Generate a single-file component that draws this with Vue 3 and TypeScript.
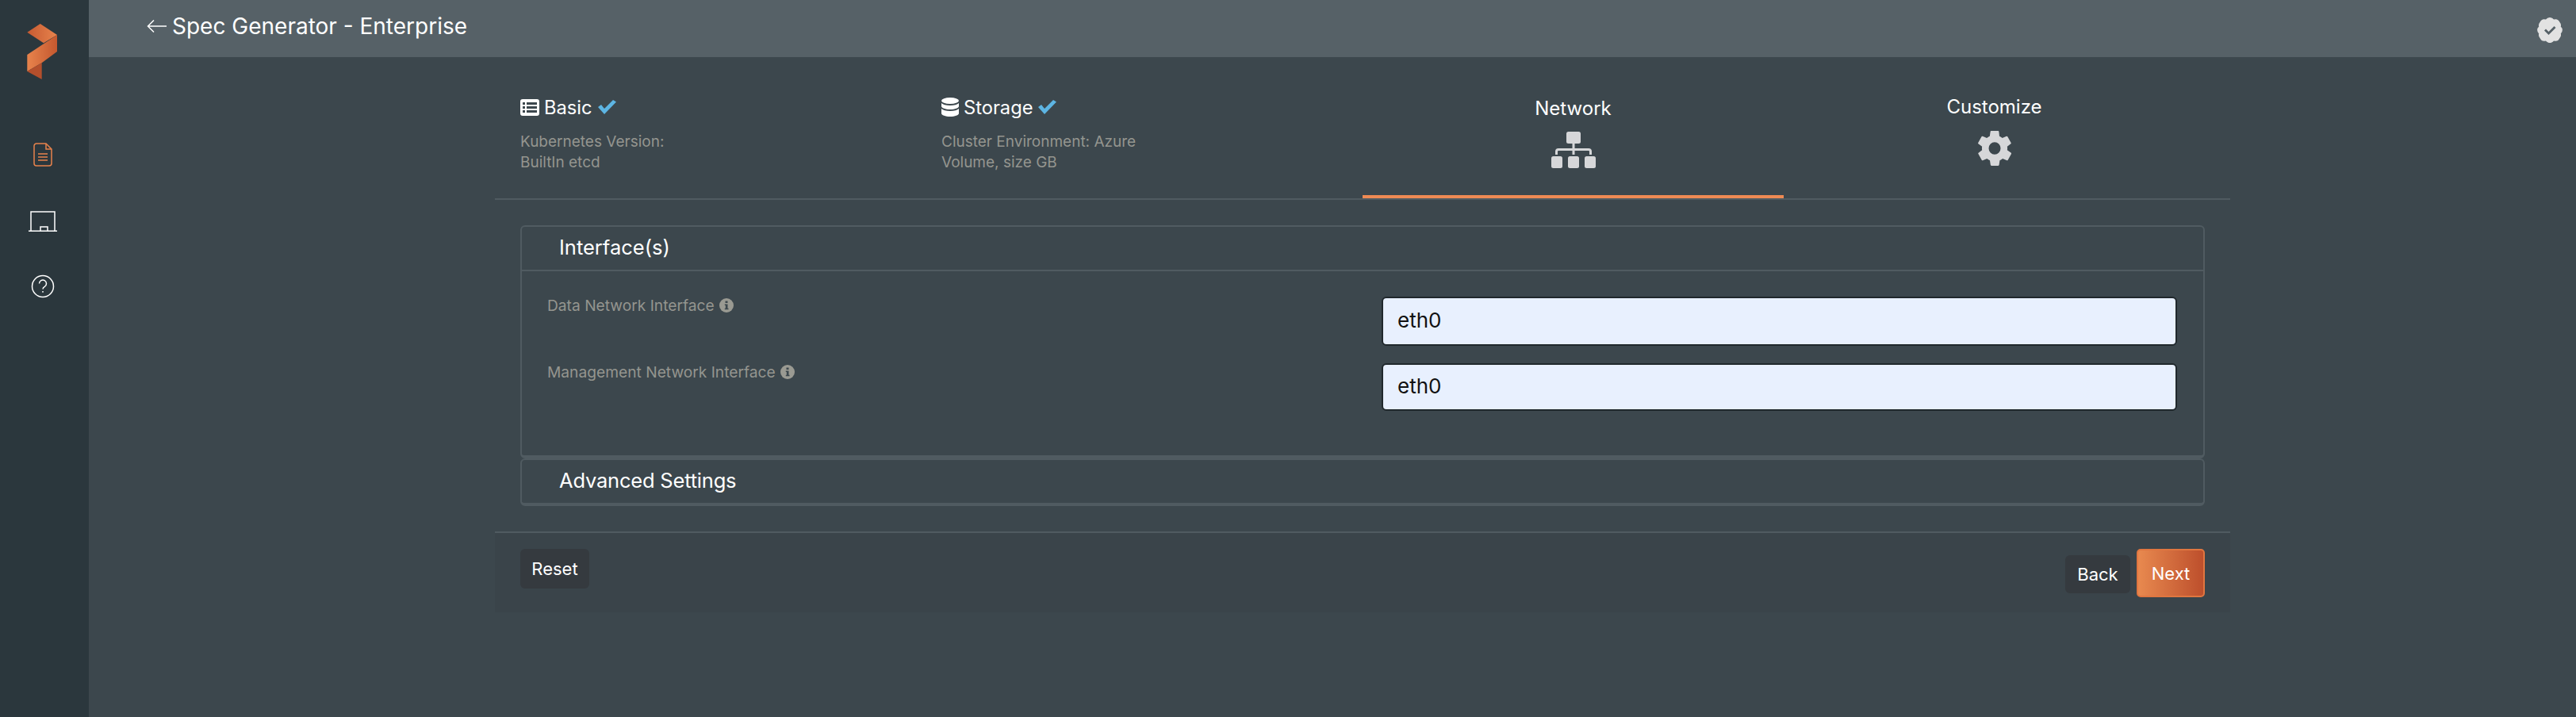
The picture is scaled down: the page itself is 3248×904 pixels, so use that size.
<script setup lang="ts">
interface Step {
  id: string
  title: string
  done: boolean
  lines: string[]
}

const steps: Step[] = [
  { id: 'basic', title: 'Basic', done: true, lines: ['Kubernetes Version:', 'BuiltIn etcd'] },
  { id: 'storage', title: 'Storage', done: true, lines: ['Cluster Environment: Azure', 'Volume, size GB'] },
  { id: 'network', title: 'Network', done: false, lines: [] },
  { id: 'customize', title: 'Customize', done: false, lines: [] },
]

const fields = ['Data Network Interface', 'Management Network Interface']
</script>

<template>
  <div class="page">
    <aside class="side">
      <svg class="logo" viewBox="0 0 40 70" width="40" height="70">
        <defs>
          <linearGradient id="lgA" x1="0" y1="0" x2="1" y2="0">
            <stop offset="0" stop-color="#c65a32" />
            <stop offset="1" stop-color="#e8834c" />
          </linearGradient>
          <linearGradient id="lgB" x1="0" y1="0" x2="1" y2="0">
            <stop offset="0" stop-color="#e8834c" />
            <stop offset="1" stop-color="#c4582f" />
          </linearGradient>
        </defs>
        <path d="M0.300 10.700 L16.700 0 L38 14 L21 24.300 Z" fill="url(#lgA)" />
        <path d="M38 14 L38 35 L18.700 49.300 L0.300 60 L0.300 39 Z" fill="url(#lgB)" />
        <path d="M0.300 60 L18.700 49.300 L18.700 70 Z" fill="#b44f2c" />
      </svg>
      <nav class="side-nav">
        <svg width="24" height="30" viewBox="0 0 24 30" fill="none" stroke="#e8834c" stroke-width="1.500">
          <path d="M4 1h12l7 7v18a3 3 0 0 1-3 3H4a3 3 0 0 1-3-3V4a3 3 0 0 1 3-3z" />
          <path d="M16 1v7h7M6 14h12M6 18h12M6 22h12" />
        </svg>
        <svg width="36" height="28" viewBox="0 0 36 28" fill="none" stroke="#fff" stroke-width="1.500">
          <path d="M3 27V3h30v24M0 27.200h36M15 27v-5h9v5" />
        </svg>
        <svg width="30" height="30" viewBox="0 0 30 30" fill="none" stroke="#fff" stroke-width="1.500">
          <circle cx="15" cy="15" r="13.500" />
          <path d="M10.500 11.500a4.500 4.500 0 1 1 6.800 3.900c-1.600.9-2.300 1.700-2.300 3.100" />
          <path d="M15 21v1.800" />
        </svg>
      </nav>
    </aside>
    <div class="main">
      <header class="top">
        <div class="crumb">
          <svg width="25" height="18" viewBox="0 0 25 18" fill="none" stroke="#fff" stroke-width="1.500">
            <path d="M25 9H1.500M9 1.500L1.500 9 9 16.500" />
          </svg>
          <span>Spec Generator - Enterprise</span>
        </div>
        <svg class="badge" width="32" height="32" viewBox="0 0 32 32">
          <path
            fill="#e2e2e2"
            fill-rule="evenodd"
            d="M16 0a6 6 0 0 1 5 2.600 6 6 0 0 1 7.300 3.100 6 6 0 0 1 1.500 5.800 6 6 0 0 1 0 9 6 6 0 0 1-1.500 5.800A6 6 0 0 1 21 29.400a6 6 0 0 1-10 0 6 6 0 0 1-7.300-3.100 6 6 0 0 1-1.500-5.800 6 6 0 0 1 0-9 6 6 0 0 1 1.500-5.800A6 6 0 0 1 11 2.600 6 6 0 0 1 16 0zM9 16.500l2-2 3.500 3.500 7-7 2 2-9 9z"
          />
        </svg>
      </header>
      <section class="panel">
        <div class="steps">
          <div v-for="s in steps" :key="s.id" class="step" :class="{ active: s.id === 'network', centered: !s.done }">
            <template v-if="s.done">
              <div class="step-title">
                <svg v-if="s.id === 'basic'" width="24" height="21" viewBox="0 0 24 21">
                  <path
                    fill="#fff"
                    fill-rule="evenodd"
                    d="M3 0h18a3 3 0 0 1 3 3v15a3 3 0 0 1-3 3H3a3 3 0 0 1-3-3V3a3 3 0 0 1 3-3zM3 4v3h3V4zm5 0v3h13V4zM3 9v3h3V9zm5 0v3h13V9zM3 14v3h3v-3zm5 0v3h13v-3z"
                  />
                </svg>
                <svg v-else width="22" height="24" viewBox="0 0 22 24" fill="#fff">
                  <ellipse cx="11" cy="4" rx="11" ry="4" />
                  <path d="M0 7c2 2 6 3 11 3s9-1 11-3v4c0 2-5 4-11 4S0 13 0 11zM0 14c2 2 6 3 11 3s9-1 11-3v6c0 2-5 4-11 4S0 22 0 20z" />
                </svg>
                <span>{{ s.title }}</span>
                <svg width="24" height="18" viewBox="0 0 24 18"><path fill="#5db5e3" d="M1 9l4-3 4 5L20 0l4 2.500L9 18z" /></svg>
              </div>
              <p v-for="line in s.lines" :key="line" class="step-line">{{ line }}</p>
            </template>
            <template v-else>
              <div class="step-name">{{ s.title }}</div>
              <svg v-if="s.id === 'network'" class="step-icon" width="56" height="46" viewBox="0 0 56 46" fill="#d6d7d9">
                <rect x="19" y="0" width="18" height="15" rx="2.500" />
                <rect x="0" y="31" width="14" height="15" rx="2.500" />
                <rect x="21" y="31" width="14" height="15" rx="2.500" />
                <rect x="42" y="31" width="14" height="15" rx="2.500" />
                <path d="M26.500 15h3v6H47a4 4 0 0 1 4 4v4h-3v-4a1 1 0 0 0-1-1H29.500v5h-3v-5H9a1 1 0 0 0-1 1v4H5v-4a4 4 0 0 1 4-4h17.500z" />
              </svg>
              <svg v-else class="step-icon gear" width="42" height="44" viewBox="2.200 2 19.600 20" preserveAspectRatio="none" fill="#d6d7d9">
                <path
                  fill-rule="evenodd"
                  d="M19.400 13c.04-.3.1-.7.1-1s-.06-.7-.1-1l2.100-1.600c.2-.15.25-.4.1-.6l-2-3.500c-.12-.2-.37-.3-.6-.2l-2.500 1c-.5-.4-1.100-.7-1.700-1L14.500 2.400c-.03-.2-.25-.4-.5-.4h-4c-.25 0-.47.2-.5.4l-.4 2.700c-.6.3-1.200.6-1.700 1l-2.500-1c-.23-.1-.48 0-.6.2l-2 3.500c-.15.2-.1.450.1.600L4.600 11c-.04.3-.1.700-.1 1s.06.7.1 1l-2.100 1.600c-.2.150-.25.400-.1.600l2 3.500c.12.2.37.3.6.2l2.500-1c.5.4 1.100.7 1.700 1l.4 2.700c.03.2.25.4.5.4h4c.25 0 .47-.2.5-.4l.4-2.700c.6-.3 1.200-.6 1.700-1l2.500 1c.23.1.48 0 .6-.2l2-3.500c.15-.2.1-.450-.1-.600zM12 15.500a3.500 3.500 0 1 1 0-7 3.500 3.500 0 0 1 0 7z"
                />
              </svg>
            </template>
          </div>
        </div>

        <div class="body">
          <div class="card">
            <h3 class="card-title bordered">Interface(s)</h3>
            <div class="fields">
              <div v-for="f in fields" :key="f" class="field">
                <label class="field-label">
                  {{ f }}
                  <svg width="18" height="18" viewBox="0 0 18 18">
                    <circle cx="9" cy="9" r="9" fill="#9a9a92" />
                    <path fill="#3c474d" d="M7.500 3.500h3v2.500h-3zM6.800 7.500h3.700v5.200h1v1.600H6.800v-1.600h1v-3.600h-1z" />
                  </svg>
                </label>
                <input class="field-input" value="eth0" />
              </div>
            </div>
          </div>
          <div class="card">
            <h3 class="card-title tight">Advanced Settings</h3>
          </div>
        </div>

        <footer class="foot">
          <button class="btn reset">Reset</button>
          <div class="foot-right">
            <button class="btn back">Back</button>
            <button class="btn next">Next</button>
          </div>
        </footer>
      </section>
    </div>
  </div>
</template>

<style>
html,
body {
  margin: 0;
  background: #3c474d;
}
</style>

<style scoped>
.page {
  display: flex;
  width: 3248px;
  height: 904px;
  overflow: hidden;
  font-family: Inter, 'Liberation Sans', sans-serif;
  color: #fff;
  background: #3c474d;
}

.side {
  width: 112px;
  flex: none;
  box-sizing: border-box;
  padding-right: 6px;
  background: #2b373d;
  display: flex;
  flex-direction: column;
  align-items: center;
}

.logo {
  margin-top: 30px;
  margin-left: 2px;
}

.side-nav {
  margin-top: 80px;
  margin-left: 2px;
  display: flex;
  flex-direction: column;
  align-items: center;
  gap: 54px;
}

.main {
  flex: 1;
  min-width: 0;
}

.top {
  height: 72px;
  background: #566167;
  display: flex;
  align-items: center;
  justify-content: space-between;
  padding: 0 17px 0 73px;
}

.crumb {
  display: flex;
  align-items: center;
  gap: 7px;
  font-size: 28px;
  margin-top: -6px;
}

.badge {
  margin-top: 4px;
}

.panel {
  width: 2188px;
  margin: 0 0 0 512px;
}

.steps {
  display: grid;
  grid-template-columns: repeat(4, 1fr);
  padding: 0 32px;
  height: 180px;
  border-bottom: 2px solid #505b61;
  box-sizing: border-box;
  margin-bottom: 32px;
}

.step {
  padding-top: 48px;
  box-sizing: border-box;
  height: 178px;
}

.step.centered {
  text-align: center;
}

.step.active {
  border-bottom: 4px solid #ee8a54;
}

.step-title {
  display: flex;
  align-items: center;
  gap: 6px;
  font-size: 23.700px;
  height: 30px;
}

.step-line {
  margin: 21px 0 0;
  font-size: 19px;
  line-height: 16px;
  color: #94958f;
}

.step-line + .step-line {
  margin-top: 10px;
}

.step-name {
  font-size: 24px;
  line-height: 30px;
}

.active .step-name {
  margin-top: 2px;
}

.step-icon {
  display: block;
  margin: 15px auto 0;
}

.active .step-icon {
  margin-top: 14px;
}

.body {
  padding: 0 32px;
}

.card {
  border: 2px solid #505b61;
  border-bottom-width: 4px;
  border-radius: 6px;
}

.card-title {
  margin: 0;
  height: 54px;
  line-height: 52px;
  padding-left: 47px;
  font-size: 25.500px;
  font-weight: 400;
  box-sizing: border-box;
}

.card-title.bordered {
  height: 56px;
  border-bottom: 2px solid #505b61;
}

.card-title.tight {
  letter-spacing: -0.200px;
}

.fields {
  padding: 32px 33px 0 32px;
  height: 232px;
  box-sizing: border-box;
  display: flex;
  flex-direction: column;
  gap: 22px;
}

.field {
  display: flex;
  justify-content: space-between;
}

.field-label {
  display: flex;
  align-items: center;
  gap: 6px;
  height: 24px;
  margin-top: -1px;
  font-size: 19.200px;
  color: #94958f;
}

.field-input {
  width: 1003px;
  height: 60px;
  box-sizing: border-box;
  border: 2px solid #20282c;
  border-radius: 6px;
  background: #e8f0fe;
  padding: 0 18px 3px;
  font: 26px Inter, 'Liberation Sans', sans-serif;
  color: #111;
}

.field:first-child .field-input {
  height: 62px;
}

.foot {
  margin-top: 32px;
  border-top: 2px solid #505b61;
  background: #3a444a;
  height: 102px;
  box-sizing: border-box;
  padding: 20px 32px 0;
  display: flex;
  justify-content: space-between;
  align-items: flex-start;
}

.foot-right {
  display: flex;
  align-items: center;
  gap: 8px;
}

.btn {
  border: none;
  border-radius: 6px;
  color: #fff;
  font: 22px Inter, 'Liberation Sans', sans-serif;
  padding: 0;
}

.reset,
.back {
  background: #353a3f;
}

.reset {
  width: 87px;
  height: 50px;
}

.back {
  width: 82px;
  height: 48px;
  margin-top: 3px;
}

.next {
  width: 86px;
  height: 61px;
  border: 2px solid #e07640;
  border-radius: 5px;
  background: linear-gradient(90deg, #e8894f, #bd4f2c);
}
</style>
